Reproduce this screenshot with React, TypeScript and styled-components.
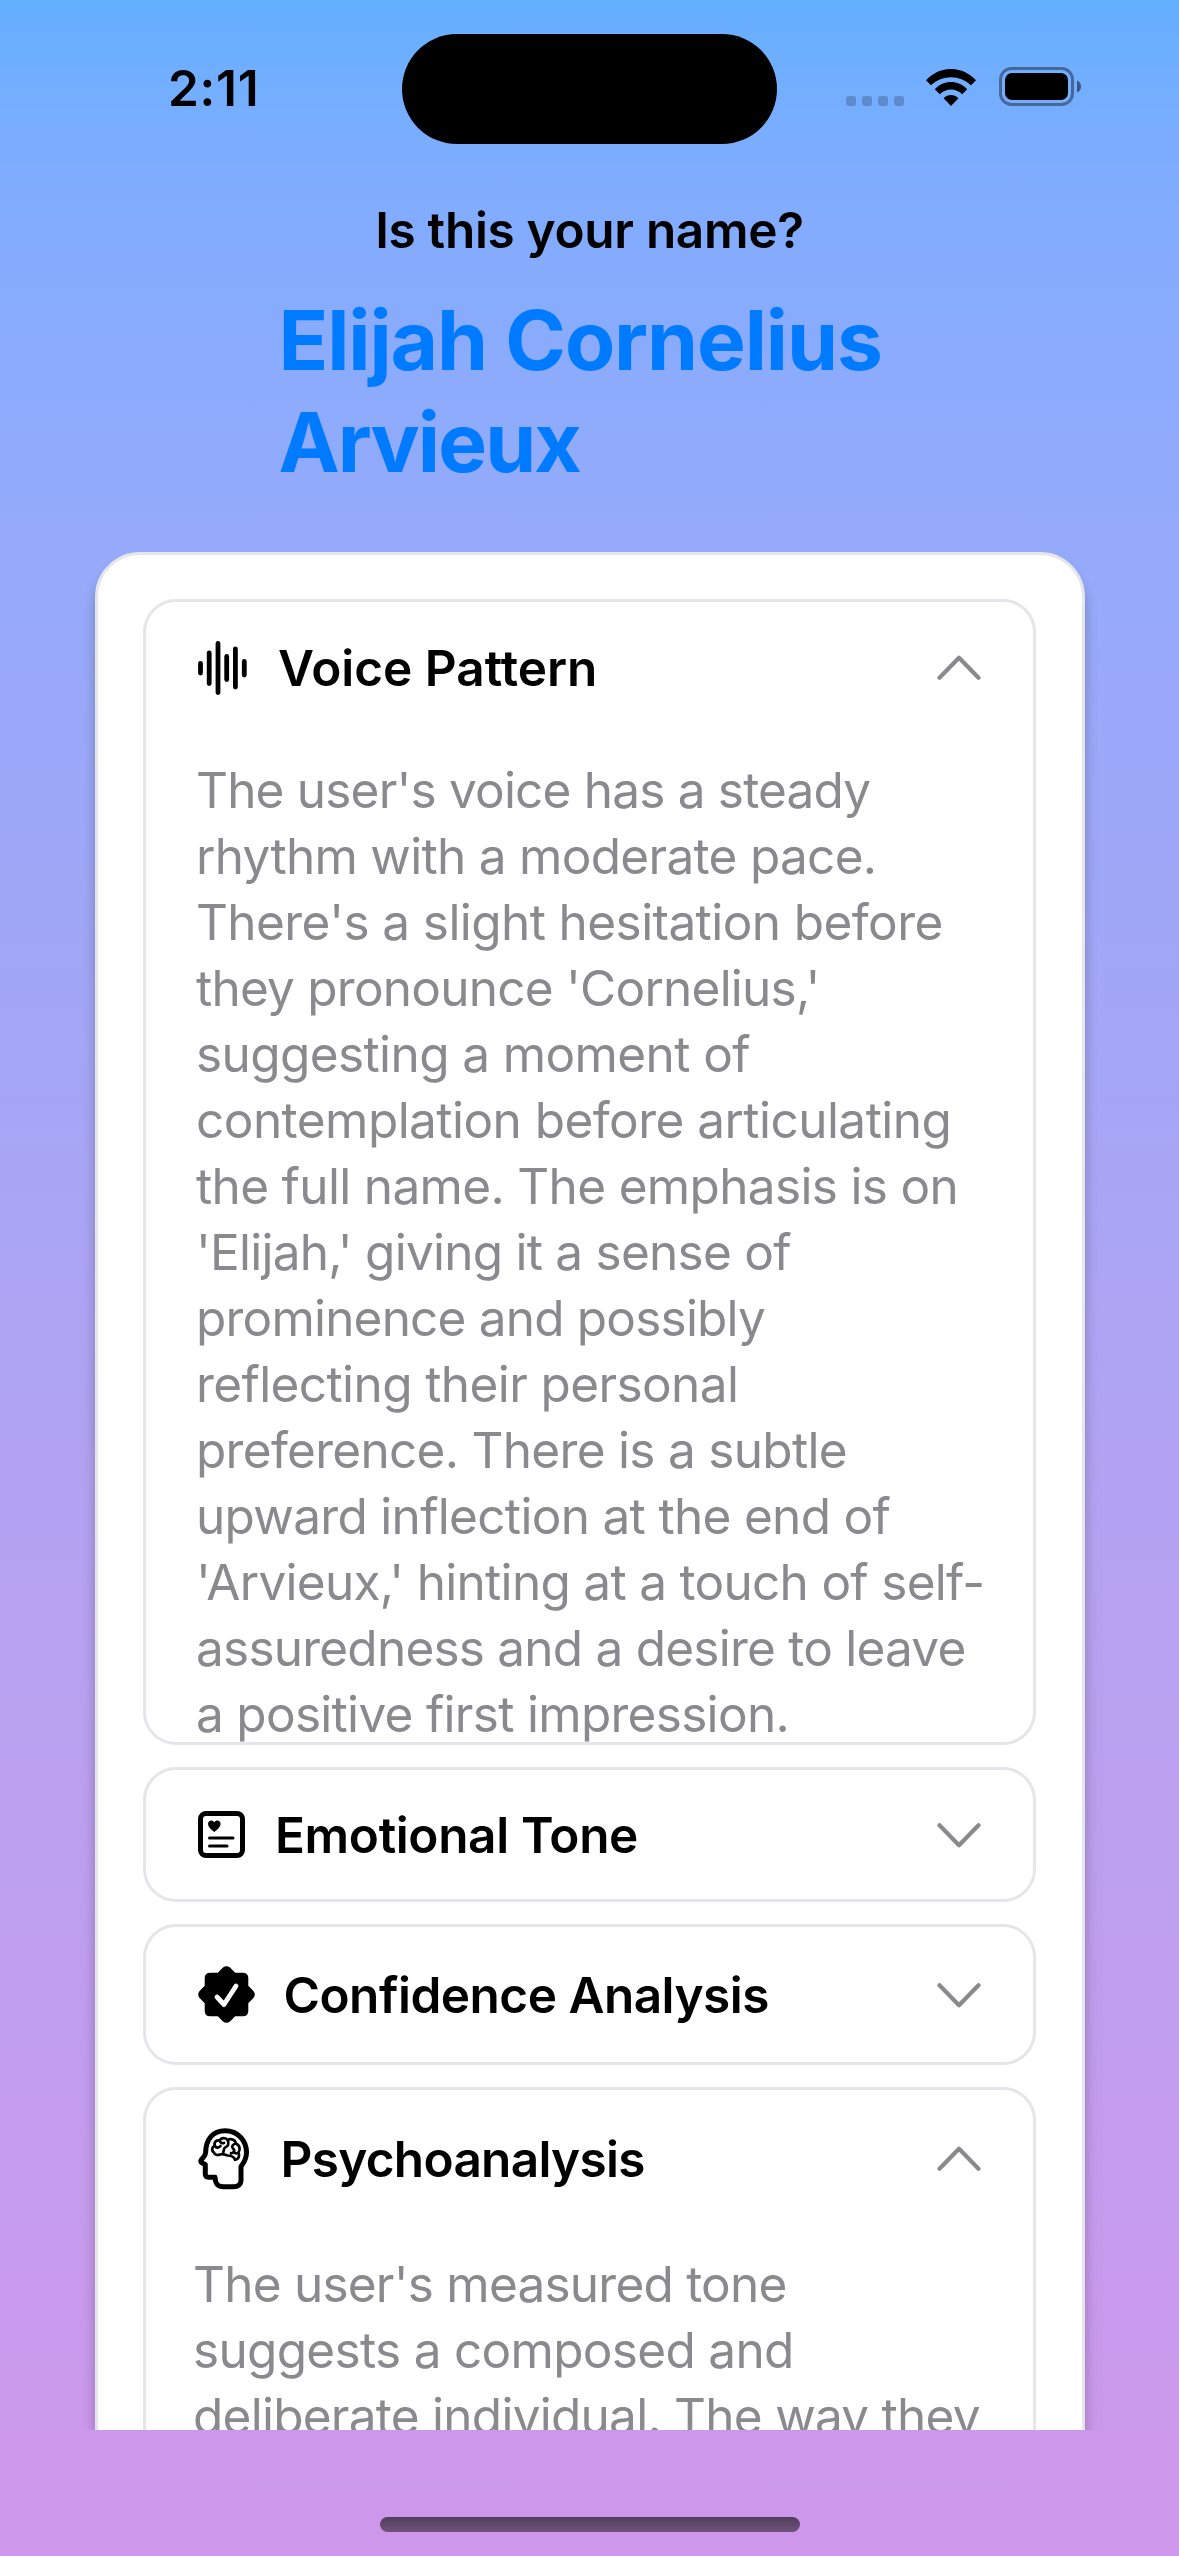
import React, { useState } from "react";
import styled, { createGlobalStyle } from "styled-components";

const GlobalStyle = createGlobalStyle`
  * { box-sizing: border-box; }
  body { margin: 0; font-family: Inter, "Liberation Sans", sans-serif; color: #000; }
  svg { display: block; flex: none; }
`;

const Screen = styled.main`
  display: flex;
  flex-direction: column;
  width: 1179px;
  height: 2556px;
  overflow: hidden;
  background: linear-gradient(
    180deg,
    #64b0ff 0,
    #72aeff 80px,
    #80acfe 180px,
    #95aafb 530px,
    #b8a1f0 1680px,
    #ce97eb 2556px
  );
`;

const StatusBar = styled.header`
  display: grid;
  grid-template-columns: 402px 375px 1fr;
  height: 144px;
  padding-top: 33px;
  flex: none;
`;

const Clock = styled.time`
  padding: 29px 0 0 168px;
  font-size: 49.5px;
  line-height: 52px;
  font-weight: 600;
  letter-spacing: 0.7px;
`;

const Island = styled.div`
  height: 110.5px;
  margin-top: 0.5px;
  border-radius: 56px;
  background: #000;
`;

const Indicators = styled.div`
  display: flex;
  align-items: flex-start;
  padding: 34px 0 0 69px;
`;

const SignalDots = styled.div`
  display: flex;
  gap: 6px;
  margin: 29px 22px 0 0;
`;

const SignalDot = styled.span`
  width: 10px;
  height: 10px;
  border-radius: 3px;
  background: rgba(0, 0, 0, 0.2);
`;

const WifiSlot = styled.div`
  margin: 2px 23px 0 0;
`;

const Heading = styled.section`
  display: flex;
  flex-direction: column;
  align-items: center;
  height: 408px;
  flex: none;
  padding-top: 55px;
`;

const Question = styled.h2`
  margin: 0;
  font-size: 49.5px;
  line-height: 62px;
  font-weight: 600;
  letter-spacing: -0.3px;
`;

const Name = styled.h1`
  width: 622px;
  margin: 29px 0 0;
  padding-right: 1px;
  font-size: 82px;
  line-height: 102px;
  font-weight: 700;
  color: #007aff;
`;

const ScrollArea = styled.section`
  height: 1878px;
  padding: 0 94.5px;
  overflow: hidden;
  flex: none;
`;

const Card = styled.div`
  display: flex;
  flex-direction: column;
  gap: 22px;
  height: 2300px;
  padding: 44px 45.5px;
  border: 3px solid #e5e5ea;
  border-radius: 45px;
  background: #fff;
  box-shadow: 0 12px 13px rgba(0, 0, 0, 0.24);
`;

const Panel = styled.article<{ $height: number }>`
  height: ${(p) => p.$height}px;
  flex: none;
  border: 3px solid #e5e5ea;
  border-radius: 33px;
  background: #fff;
`;

const PanelHeader = styled.button<{ $height: number; $gap: number }>`
  display: flex;
  align-items: center;
  gap: ${(p) => p.$gap}px;
  width: 100%;
  height: ${(p) => p.$height}px;
  padding: 0 52px;
  border: 0;
  background: none;
  color: #000;
  font: inherit;
  text-align: left;
`;

const PanelTitle = styled.span<{ $tracking: number }>`
  flex: 1;
  font-size: 49.5px;
  line-height: 62px;
  font-weight: 600;
  letter-spacing: ${(p) => p.$tracking}px;
`;

const PanelText = styled.p<{ $inset: number }>`
  margin: 0;
  padding: 23px 0 0 ${(p) => p.$inset}px;
  font-size: 49.5px;
  line-height: 66px;
  color: #8a8a8e;
`;

const Line = styled.span<{ $tracking: number }>`
  display: block;
  white-space: nowrap;
  letter-spacing: ${(p) => p.$tracking}px;
`;

const HomeArea = styled.footer`
  display: flex;
  justify-content: center;
  padding-top: 87px;
`;

const HomeIndicator = styled.div`
  width: 420px;
  height: 15px;
  border-radius: 8px;
  background: linear-gradient(#513e5b, #6f537c);
`;

const Wifi = () => (
  <svg width="50" height="37" viewBox="0 0 50 37">
    <path d="M0 11.3C14-3.8 36-3.8 50 11.3L45 16.3C34 5.4 16 5.4 5 16.3Z" />
    <path d="M8.8 20.2C18 10.7 32 10.7 41.2 20.2L36.2 25.2C29.5 19 20.5 19 13.8 25.2Z" />
    <path d="M17.6 29.2C22 25 28 25 32.4 29.2L25 37Z" />
  </svg>
);

const Battery = () => (
  <svg width="83" height="39" viewBox="0 0 83 39">
    <rect x="1.5" y="1.5" width="72" height="36" rx="11" fill="none" stroke="#000" strokeOpacity=".4" strokeWidth="3" />
    <rect x="6" y="6" width="63" height="27" rx="7" />
    <path d="M78 13.5C80.7 14.5 82 16.8 82 19.5S80.7 24.5 78 25.5Z" fillOpacity=".5" />
  </svg>
);

const Waveform = () => (
  <svg width="50" height="54" viewBox="0 0 50 54" stroke="#000" strokeWidth="4.8" strokeLinecap="round">
    <path d="M2.5 22.5V32M11.2 12V42.5M20 2.5V51.5M28.7 15.5V38.5M37.4 8V46M46.3 20.5V34" />
  </svg>
);

const HeartCard = () => (
  <svg width="47" height="47" viewBox="0 0 47 47">
    <rect x="2.5" y="2.5" width="42" height="42" rx="5.5" fill="none" stroke="#000" strokeWidth="5" />
    <path d="M16.3 21C13 18.7 10 15.8 10 12.8C10 9.3 14.3 8.2 16.3 11.2C18.3 8.2 22.6 9.3 22.6 12.8C22.6 15.8 19.6 18.7 16.3 21Z" />
    <path d="M11.5 27H35M11.5 35H29" stroke="#000" strokeWidth="3" strokeLinecap="round" />
  </svg>
);

const SealCheck = () => (
  <svg width="57" height="57" viewBox="0 0 57 57">
    <path d="M25 1.6Q28.5-1.2 32 1.6L37.2 6.7H44.8Q50.3 6.7 50.3 12.2V19.8L55.4 25Q58.2 28.5 55.4 32L50.3 37.2V44.8Q50.3 50.3 44.8 50.3H37.2L32 55.4Q28.5 58.2 25 55.4L19.8 50.3H12.2Q6.7 50.3 6.7 44.8V37.2L1.6 32Q-1.2 28.5 1.6 25L6.7 19.8V12.2Q6.7 6.7 12.2 6.7H19.8Z" />
    <path d="M19 31L26 38.5L38 20" fill="none" stroke="#fff" strokeWidth="4.8" strokeLinecap="round" strokeLinejoin="round" />
  </svg>
);

const HeadBrain = () => (
  <svg width="52" height="62" viewBox="0 0 52 62" fill="none" stroke="#000" strokeLinejoin="round" strokeLinecap="round">
    <path
      strokeWidth="5"
      d="M7.6 25C7.8 11 15 2.8 27 2.8C40 2.8 48.5 12.5 48.5 24.5C48.5 30 46.5 34 43 38.5V52C43 56.5 40 58.8 35.5 58.8H25.5C20 58.8 17.3 56.2 17 49.2H10.5C8.3 49.2 7.3 48 7.3 46V36.5L3.8 34.8C2.6 34.2 2.5 33.2 3.2 32C5 29.3 7.5 27.5 7.6 25Z"
    />
    <path
      strokeWidth="2.7"
      d="M16 24.5C13 22.5 14 18.5 17 18C15.5 14.5 18 11.5 21.5 12.5C23.5 9.2 28 9.6 29.5 12C33.5 10 37.5 12 37.8 15.5C42 17 42.5 22 40.5 24.5C42 28 40.5 31.5 37 32C36 28 33 27.5 29.5 27.5C26.5 26.5 25 25.5 22 26.5C19.5 27.5 16.5 27 16 24.5M17 18C18.5 20.5 21 20 22.5 18M21.5 12.5C22 14.5 24 15.5 26 15M29.5 12C31.5 15.5 30 18.5 27 19.5C25.5 20.5 26 22.5 25 25.5M37.8 15.5C34.5 16.5 33 18.5 35 20.5C37.5 22.5 35.5 25.5 33 25.2M40.5 24.5C39 25.5 38 25.5 37 25"
    />
  </svg>
);

const Chevron = ({ open }: { open: boolean }) => (
  <svg width="44" height="26" viewBox="0 0 44 26" fill="none" stroke="#8a8a8e" strokeWidth="4.2" strokeLinecap="round" strokeLinejoin="round">
    <path d={open ? "M2.5 22.7L22 2.8L41.5 22.7" : "M2.5 3.3L22 23.2L41.5 3.3"} />
  </svg>
);

type TextLine = [text: string, tracking: number];

type PanelInfo = {
  title: string;
  icon: React.ReactNode;
  height: number;
  header: number;
  gap: number;
  tracking: number;
  inset?: number;
  lines?: TextLine[];
};

const panels: PanelInfo[] = [
  {
    title: "Voice Pattern",
    icon: <Waveform />,
    height: 1146,
    header: 132,
    gap: 30,
    tracking: 0,
    inset: 50,
    lines: [
      ["The user's voice has a steady", -0.8],
      ["rhythm with a moderate pace.", -0.7],
      ["There's a slight hesitation before", -0.58],
      ["they pronounce 'Cornelius,'", -0.76],
      ["suggesting a moment of", -0.6],
      ["contemplation before articulating", -0.54],
      ["the full name. The emphasis is on", -0.66],
      ["'Elijah,' giving it a sense of", -0.75],
      ["prominence and possibly", -0.8],
      ["reflecting their personal", -0.6],
      ["preference. There is a subtle", -0.7],
      ["upward inflection at the end of", -0.68],
      ["'Arvieux,' hinting at a touch of self-", -0.7],
      ["assuredness and a desire to leave", -0.77],
      ["a positive first impression.", -0.7],
    ],
  },
  { title: "Emotional Tone", icon: <HeartCard />, height: 135, header: 129, gap: 30, tracking: -0.35 },
  { title: "Confidence Analysis", icon: <SealCheck />, height: 141, header: 135, gap: 28.5, tracking: -0.5 },
  {
    title: "Psychoanalysis",
    icon: <HeadBrain />,
    height: 900,
    header: 138,
    gap: 30.5,
    tracking: -0.7,
    inset: 47,
    lines: [
      ["The user's measured tone", -0.77],
      ["suggests a composed and", -0.69],
      ["deliberate individual. The way they", -0.74],
    ],
  },
];

export default function App() {
  const [expanded, setExpanded] = useState<string[]>(["Voice Pattern", "Psychoanalysis"]);
  const toggle = (title: string) =>
    setExpanded((now) => (now.includes(title) ? now.filter((t) => t !== title) : [...now, title]));

  return (
    <>
      <GlobalStyle />
      <Screen>
        <StatusBar>
          <Clock>2:11</Clock>
          <Island />
          <Indicators>
            <SignalDots>
              <SignalDot />
              <SignalDot />
              <SignalDot />
              <SignalDot />
            </SignalDots>
            <WifiSlot>
              <Wifi />
            </WifiSlot>
            <Battery />
          </Indicators>
        </StatusBar>
        <Heading>
          <Question>Is this your name?</Question>
          <Name>
            <Line $tracking={-1.1}>Elijah Cornelius</Line>
            <Line $tracking={-1.9}>Arvieux</Line>
          </Name>
        </Heading>
        <ScrollArea>
          <Card>
            {panels.map((p) => {
              const open = expanded.includes(p.title);
              return (
                <Panel key={p.title} $height={open || !p.lines ? p.height : 135}>
                  <PanelHeader $height={p.header} $gap={p.gap} onClick={() => toggle(p.title)}>
                    {p.icon}
                    <PanelTitle $tracking={p.tracking}>{p.title}</PanelTitle>
                    <Chevron open={open} />
                  </PanelHeader>
                  {open && p.lines && (
                    <PanelText $inset={p.inset ?? 0}>
                      {p.lines.map(([text, tracking]) => (
                        <Line key={text} $tracking={tracking}>
                          {text}
                        </Line>
                      ))}
                    </PanelText>
                  )}
                </Panel>
              );
            })}
          </Card>
        </ScrollArea>
        <HomeArea>
          <HomeIndicator />
        </HomeArea>
      </Screen>
    </>
  );
}
